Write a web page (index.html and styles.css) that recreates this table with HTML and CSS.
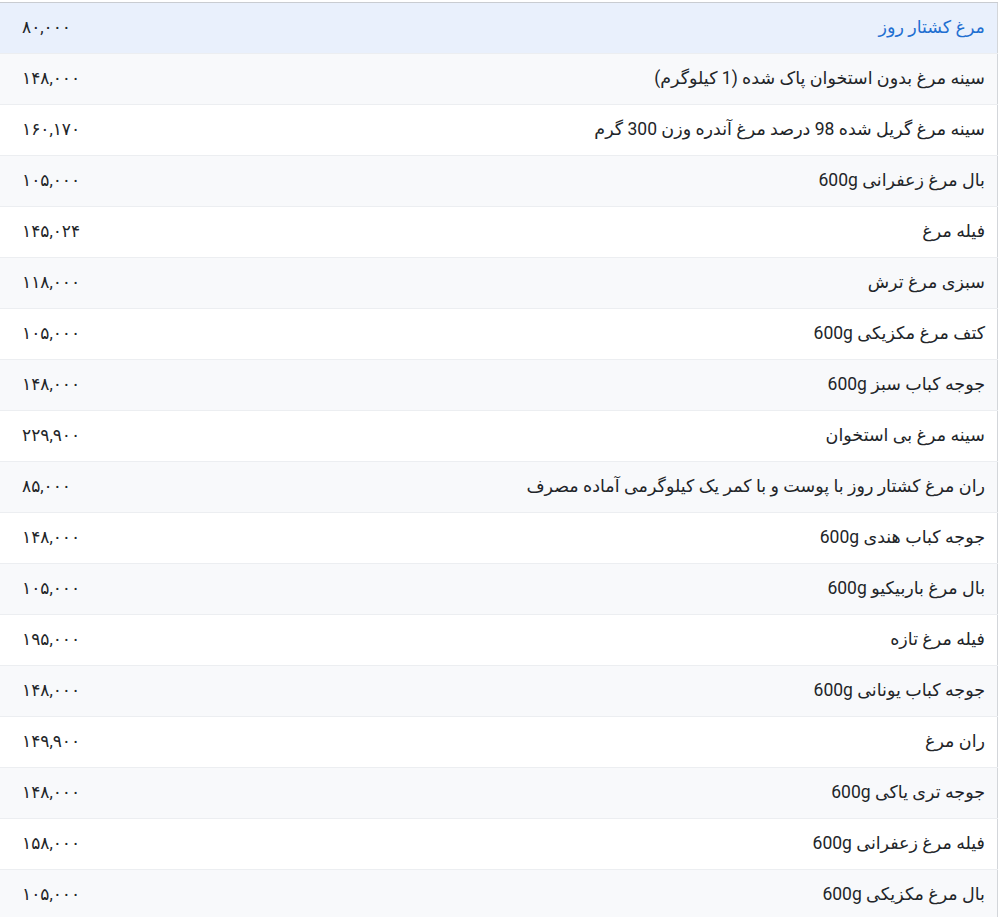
FILE: index.html
```html
<!DOCTYPE html>
<html lang="fa" dir="rtl">
<head>
<meta charset="utf-8">
<link rel="stylesheet" href="styles.css">
</head>
<body>
<div class="wrap">
<table class="prices">
<tbody>
<tr class="active"><td class="name">مرغ کشتار روز</td><td class="price">۸۰,۰۰۰</td></tr>
<tr><td class="name">سینه مرغ بدون استخوان پاک شده (1 کیلوگرم)</td><td class="price">۱۴۸,۰۰۰</td></tr>
<tr><td class="name">سینه مرغ گریل شده 98 درصد مرغ آندره وزن 300 گرم</td><td class="price">۱۶۰,۱۷۰</td></tr>
<tr><td class="name">بال مرغ زعفرانی 600g</td><td class="price">۱۰۵,۰۰۰</td></tr>
<tr><td class="name">فیله مرغ</td><td class="price">۱۴۵,۰۲۴</td></tr>
<tr><td class="name">سبزی مرغ ترش</td><td class="price">۱۱۸,۰۰۰</td></tr>
<tr><td class="name">کتف مرغ مکزیکی 600g</td><td class="price">۱۰۵,۰۰۰</td></tr>
<tr><td class="name">جوجه کباب سبز 600g</td><td class="price">۱۴۸,۰۰۰</td></tr>
<tr><td class="name">سینه مرغ بی استخوان</td><td class="price">۲۲۹,۹۰۰</td></tr>
<tr><td class="name">ران مرغ کشتار روز با پوست و با کمر یک کیلوگرمی آماده مصرف</td><td class="price">۸۵,۰۰۰</td></tr>
<tr><td class="name">جوجه کباب هندی 600g</td><td class="price">۱۴۸,۰۰۰</td></tr>
<tr><td class="name">بال مرغ باربیکیو 600g</td><td class="price">۱۰۵,۰۰۰</td></tr>
<tr><td class="name">فیله مرغ تازه</td><td class="price">۱۹۵,۰۰۰</td></tr>
<tr><td class="name">جوجه کباب یونانی 600g</td><td class="price">۱۴۸,۰۰۰</td></tr>
<tr><td class="name">ران مرغ</td><td class="price">۱۴۹,۹۰۰</td></tr>
<tr><td class="name">جوجه تری یاکی 600g</td><td class="price">۱۴۸,۰۰۰</td></tr>
<tr><td class="name">فیله مرغ زعفرانی 600g</td><td class="price">۱۵۸,۰۰۰</td></tr>
<tr><td class="name">بال مرغ مکزیکی 600g</td><td class="price">۱۰۵,۰۰۰</td></tr>
</tbody>
</table>
</div>
</body>
</html>
```
FILE: styles.css
```css
html, body {
  margin: 0;
  padding: 0;
  background: #ffffff;
}
body {
  font-family: Roboto, "DejaVu Sans", "Noto Sans", sans-serif;
  font-size: 17.5px;
  color: #222529;
}
.wrap {
  padding-top: 2px;
}
.prices {
  width: 998px;
  border-collapse: collapse;
  border-top: 1px solid #c9ccd1;
  border-right: 1px solid #d3d6da;
}
.prices td {
  height: 47px;
  padding: 0 0 3px 0;
  border-bottom: 1px solid #eceef1;
  vertical-align: middle;
  line-height: 20px;
}
.prices tr:nth-child(even) td {
  background: #f8f9fb;
}
.prices tr:nth-child(odd) td {
  background: #ffffff;
}
.prices tr.active td {
  background: #e9f0fc;
}
.name {
  text-align: right;
  padding-right: 12px !important;
}
.active .name {
  color: #1f6fd1;
}
.price {
  width: 180px;
  text-align: left;
  padding-left: 22px !important;
  font-size: 17px;
}
```
